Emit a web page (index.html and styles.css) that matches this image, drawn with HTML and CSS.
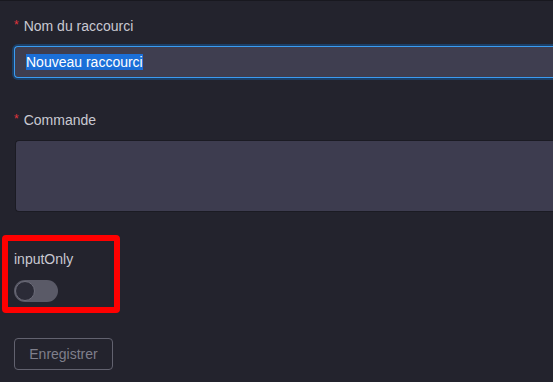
FILE: index.html
```html
<!DOCTYPE html>
<html>
<head>
<meta charset="UTF-8">
<title>Raccourci</title>
<link rel="stylesheet" href="styles.css">
</head>
<body>
<div class="form">
<div class="form-item">
<label class="form-label"><span class="required">*</span>Nom du raccourci</label>
<div class="text-input focused"><span class="selection">Nouveau raccourci</span></div>
</div>
<div class="form-item">
<label class="form-label"><span class="required">*</span>Commande</label>
<div class="text-area"></div>
</div>
<div class="form-item highlighted">
<label class="form-label">inputOnly</label>
<div class="switch"><div class="switch-knob"></div></div>
</div>
<button class="save-btn">Enregistrer</button>
</div>
</body>
</html>
```
FILE: styles.css
```css
html,body{margin:0;padding:0;}
body{background-color:#23232d;font-family:'Liberation Sans',Arial,sans-serif;font-size:14px;color:#c9c9d2;
width:553px;height:382px;overflow:hidden;border-top:1px solid #18181f;box-sizing:border-box;}
.form{width:100%;padding:14px 0 0 14px;box-sizing:border-box;}
.form-item{margin-bottom:31px;}
.form-label{display:block;line-height:22px;height:22px;margin-bottom:9px;}
.required{color:#e0353d;font-size:12px;margin-right:5px;vertical-align:top;position:relative;top:-1px;}
.text-input{height:32px;box-sizing:border-box;background-color:#3f3e50;border:1px solid #3a9cf2;border-right:none;
border-radius:4px 0 0 4px;box-shadow:0 0 0 2px #1c3f66;padding:0 11px;display:flex;align-items:center;font-size:14px;color:#fff;}
.selection{background-color:#1b6fd8;line-height:16px;}
.text-area{height:72px;box-sizing:border-box;background-color:#3d3c4f;border:1px solid #1b1b23;border-right:none;
border-radius:4px 0 0 4px;margin-left:1px;}
.form-item:nth-child(2){margin-bottom:23px;}
.highlighted{width:118px;box-sizing:border-box;margin-left:-12px;border:6px solid #ff0000;border-radius:4px;
padding:7px 6px 5px 6px;margin-bottom:25px;}
.highlighted .form-label{margin-bottom:10px;}
.switch{width:44px;height:22px;border-radius:11px;background-color:#5a5a67;position:relative;}
.switch-knob{position:absolute;left:1px;top:1px;width:18px;height:18px;border-radius:50%;background-color:#2b2b37;
border:1px solid #6c6c79;box-sizing:content-box;}
.save-btn{display:block;width:99px;height:32px;background:transparent;border:1px solid #62626f;border-radius:4px;
color:#7f7f8b;font-family:'Liberation Sans',Arial,sans-serif;font-size:14px;padding:0;cursor:pointer;}
```
